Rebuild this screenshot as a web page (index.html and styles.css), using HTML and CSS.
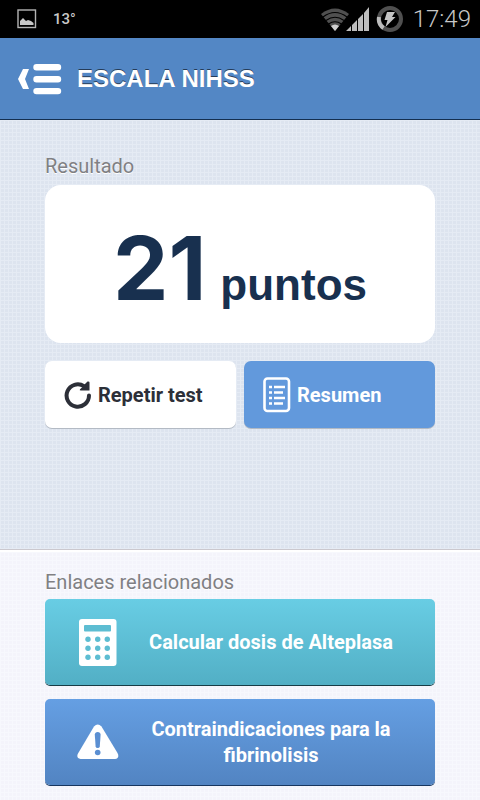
FILE: index.html
```html
<!DOCTYPE html>
<html lang="es">
<head>
<meta charset="utf-8">
<meta name="viewport" content="width=device-width, initial-scale=1">
<title>Escala NIHSS</title>
<link rel="stylesheet" href="styles.css">
</head>
<body>
<div class="status">
  <svg width="20" height="20" viewBox="0 0 20 20" aria-hidden="true"><rect x="1" y="1" width="17.5" height="17.5" fill="none" stroke="#b4b4b4" stroke-width="1.4"/><path d="M3 16v-4l3-3 3 3 2-1 3 1 2.500 2v2z" fill="#c8c8c8"/></svg>
  <span class="temperature">13°</span>
  <svg class="wifi" width="30" height="24" viewBox="0 0 30 24" aria-hidden="true"><path d="M1 7Q15-4 29 7L15 24z" fill="#505050"/><path d="M3 10Q15 1 27 10M6 13.500Q15 7 24 13.500M8.500 17Q15 12.500 21.500 17" fill="none" stroke="#000" stroke-width="1.100"/><path d="M11 19Q15 16 19 19L15 24z" fill="#d0d0d0"/></svg>
  <svg class="signal" width="24" height="24" viewBox="0 0 24 24" aria-hidden="true"><path d="M0 24L5 19V24zM6 24V18L11 13V24zM12 24V12L17 7V24zM18 24V6L23 0V24z" fill="#bdbdbd"/></svg>
  <svg class="battery" width="28" height="28" viewBox="0 0 28 28" aria-hidden="true"><circle cx="14" cy="14" r="11" fill="none" stroke="#505050" stroke-width="4"/><path d="M3 12A11 11 0 0 0 7.500 23" fill="none" stroke="#bdbdbd" stroke-width="4"/><path d="M11 7h8l-3 5h3.500L9.500 22l2-7H8.500z" fill="#c4c4c4"/></svg>
  <time class="clock">17:49</time>
</div>
<header class="header">
  <button class="menu" type="button" aria-label="Abrir menú">
    <svg width="44" height="32" viewBox="0 0 44 32" aria-hidden="true"><path d="M5 6h6L7 16l4 10H5L0 16z" fill="#fff"/><path d="M18.500 4.300H40M18.500 16.200H40M18.500 28.100H40" stroke="#fff" stroke-width="6.400" stroke-linecap="round"/></svg>
  </button>
  <h1 class="title">ESCALA NIHSS</h1>
</header>
<main class="main">
  <section class="result">
    <h2 class="label">Resultado</h2>
    <p class="score"><span class="value">21</span><span class="unit">puntos</span></p>
    <div class="actions">
      <button class="action" type="button">
        <svg width="28" height="28" viewBox="0 0 28 28" aria-hidden="true"><path d="M25 14.500A11.200 11.200 0 1 1 20 5.200" fill="none" stroke="#2c2f38" stroke-width="4" stroke-linecap="round"/><path d="M21 3L23.500 .5Q25.500 0 25.500 1.500V9.500H17Q15 9.500 16 8.300L18 6.500z" fill="#2c2f38"/></svg>
        Repetir test
      </button>
      <button class="action action-primary" type="button">
        <svg width="28" height="36" viewBox="0 0 28 36" aria-hidden="true"><rect x="1.500" y="1.500" width="24.500" height="32.500" rx="3" fill="none" stroke="#fff" stroke-width="2.600"/><path d="M6 10h3M6 15.500h3M6 21h3M6 26.500h3M11 10h11M11 15.500h9M11 21h11M11 26.500h9" stroke="#fff" stroke-width="2.700"/></svg>
        Resumen
      </button>
    </div>
  </section>
  <section class="related">
    <h2 class="label">Enlaces relacionados</h2>
    <a class="link link-teal" href="#alteplasa">
      <svg width="42" height="48" viewBox="0 0 42 48" aria-hidden="true"><rect x="2" y="1" width="37.500" height="47" rx="3" fill="#fff"/><g fill="#5dbdd2"><rect x="7" y="7" width="27" height="6.500" rx="1"/><circle cx="11" cy="21.300" r="2.700"/><circle cx="20.700" cy="21.300" r="2.700"/><circle cx="30.300" cy="21.300" r="2.700"/><circle cx="11" cy="30.300" r="2.700"/><circle cx="20.700" cy="30.300" r="2.700"/><circle cx="30.300" cy="30.300" r="2.700"/><circle cx="11" cy="39.300" r="2.700"/><circle cx="20.700" cy="39.300" r="2.700"/><circle cx="30.300" cy="39.300" r="2.700"/></g></svg>
      <span class="link-text">Calcular dosis de Alteplasa</span>
    </a>
    <a class="link link-blue" href="#contraindicaciones">
      <svg width="42" height="36" viewBox="0 0 42 36" aria-hidden="true"><path d="M17 2.500Q20.700-1.500 24.500 2.500L40.500 29Q43 34 38 35H3.500Q-1.200 34 1 29.500z" fill="#fff"/><path d="M17.800 10.500Q18 8 20.700 8T23.600 10.500L22.800 22.500Q22.500 24 20.700 24T18.600 22.500z" fill="#5b8fd2"/><circle cx="20.700" cy="28.500" r="2.800" fill="#5b8fd2"/></svg>
      <span class="link-text">Contraindicaciones para la fibrinolisis</span>
    </a>
  </section>
</main>
</body>
</html>
```
FILE: styles.css
```css
* {
  box-sizing: border-box;
}

body {
  display: flex;
  flex-direction: column;
  min-height: 100vh;
  margin: 0;
  font-family: Roboto, "Liberation Sans", sans-serif;
  background: #f4f5fc;
}

svg {
  display: block;
  flex: none;
}

button {
  border: 0;
  font: inherit;
  cursor: pointer;
}

.status {
  display: flex;
  align-items: center;
  height: 38px;
  padding: 0 9px 0 17px;
  color: #c8c8c8;
  background: #000;
}

.temperature {
  margin-left: 16px;
  font-size: 15px;
  font-weight: 500;
}

.wifi {
  margin-left: auto;
}

.signal {
  margin-left: -4px;
}

.battery {
  margin-left: 6px;
}

.clock {
  margin-left: 9px;
  font-size: 24px;
  font-weight: 300;
}

.header {
  display: flex;
  align-items: center;
  gap: 15px;
  height: 82px;
  padding: 0 18px;
  color: #fff;
  background: #5387c5;
  border-bottom: 1px solid #142f50;
}

.menu {
  padding: 0;
  background: none;
}

.title {
  margin: 0;
  font: bold 24px/28px "Liberation Sans", sans-serif;
  text-shadow: 0 -1px 0 #263c58;
}

.main {
  display: flex;
  flex: 1;
  flex-direction: column;
}

.result,
.related {
  padding: 0 45px;
  background-size: 4px 4px;
}

.result {
  flex: 1;
  padding-top: 32px;
  padding-bottom: 32px;
  background-color: #dde4ef;
  background-image:
    linear-gradient(#e5ebf4 1px, transparent 1px),
    linear-gradient(90deg, #e5ebf4 1px, transparent 1px);
  border-bottom: 1px solid #cbc8ce;
}

.related {
  padding-top: 16px;
  padding-bottom: 15px;
  background-color: #f4f4fb;
  background-image:
    linear-gradient(#f7f8fd 1px, transparent 1px),
    linear-gradient(90deg, #f7f8fd 1px, transparent 1px);
  border-top: 2px solid #fff;
}

.label {
  margin: 0;
  padding-bottom: 5px;
  color: #808083;
  font-size: 20px;
  font-weight: 400;
  line-height: 28px;
  text-shadow: 0 1px 0 #fff;
}

.related .label {
  padding-bottom: 3px;
}

.score {
  display: flex;
  align-items: baseline;
  justify-content: center;
  gap: 14px;
  margin: 0 0 18px;
  padding: 36px 0 28px;
  color: #18304f;
  font-family: "Liberation Sans", sans-serif;
  font-weight: bold;
  background: #fff;
  border-radius: 16px;
}

.value {
  font-family: Inter, "Liberation Sans", sans-serif;
  font-size: 88px;
  line-height: 94px;
}

.unit {
  font-size: 44px;
  line-height: 48px;
}

.actions {
  display: grid;
  grid-template-columns: 1fr 1fr;
  gap: 8px;
}

.action {
  display: flex;
  align-items: center;
  gap: 6px;
  height: 67px;
  padding: 0 19px;
  color: #2c2f38;
  font-size: 20px;
  font-weight: 700;
  background: #fff;
  border-radius: 7px;
  box-shadow: 0 1px 0 #b3bac4;
}

.action-primary {
  color: #fff;
  background: #6299dc;
}

.link {
  display: flex;
  align-items: center;
  min-height: 86px;
  padding: 0 12px 0 32px;
  color: #fff;
  font-size: 20px;
  font-weight: 700;
  line-height: 26px;
  text-align: center;
  text-decoration: none;
  border-radius: 5px;
}

.link + .link {
  margin-top: 14px;
}

.link-text {
  flex: 1;
  padding: 0 16px;
}

.link-teal {
  background: linear-gradient(#68cde4, #52afc5);
  box-shadow: 0 1px 0 #173c46;
}

.link-blue {
  background: linear-gradient(#659fe3, #5284c2);
  box-shadow: 0 1px 0 #17365f;
}
```
